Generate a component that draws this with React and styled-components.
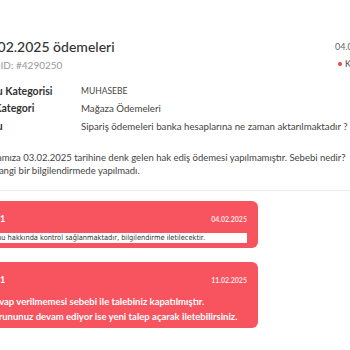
import styled, { createGlobalStyle } from "styled-components";

const GlobalStyle = createGlobalStyle`
  html, body {
    margin: 0;
    padding: 0;
    background: #fff;
    overflow: hidden;
  }
  body {
    font-family: Lato, "Noto Sans", sans-serif;
    color: #333;
  }
`;

const replies = [
  {
    id: 1,
    no: "No1",
    date: "04.02.2025",
    note: "Konu hakkında kontrol sağlanmaktadır, bilgilendirme iletilecektir.",
  },
  {
    id: 2,
    no: "No1",
    date: "11.02.2025",
    lines: [
      "Cevap verilmemesi sebebi ile talebiniz kapatılmıştır.",
      "Sorununuz devam ediyor ise yeni talep açarak iletebilirsiniz.",
    ],
  },
];

const App = () => {
  return (
    <>
      <GlobalStyle />
      <PageStyle>
        <div className='header'>
          <div>
            <h1>03.02.2025 ödemeleri</h1>
            <p className='ticketId'>Bilet ID: #4290250</p>
          </div>
          <div className='side'>
            <p className='date'>04.02.2025</p>
            <Status>Kapalı</Status>
          </div>
        </div>

        <InfoTable>
          <dt>Konu Kategorisi</dt>
          <dd className='upper'>MUHASEBE</dd>
          <dt>Alt Kategori</dt>
          <dd>Mağaza Ödemeleri</dd>
          <dt>Konu</dt>
          <dd>Sipariş ödemeleri banka hesaplarına ne zaman aktarılmaktadır ?</dd>
        </InfoTable>

        <Message>
          Firmamıza 03.02.2025 tarihine denk gelen hak ediş ödemesi yapılmamıştır. Sebebi nedir?
          <br />
          Herhangi bir bilgilendirmede yapılmadı.
        </Message>

        <Divider />

        <ReplyList>
          {replies.map((reply) => (
            <ReplyCard key={reply.id}>
              <div className='cardHead'>
                <span>{reply.no}</span>
                <span className='cardDate'>{reply.date}</span>
              </div>
              <div className='cardBody'>
                {reply.note && <Note>{reply.note}</Note>}
                {reply.lines && reply.lines.map((line) => <p key={line}>{line}</p>)}
              </div>
            </ReplyCard>
          ))}
        </ReplyList>
      </PageStyle>
    </>
  );
};

const PageStyle = styled.div`
  width: 420px;
  margin-left: -22px;
  padding-top: 37px;

  p {
    margin: 0;
  }

  .header {
    display: flex;
    justify-content: space-between;
    width: 412px;

    h1 {
      margin: 0;
      font-size: 14px;
      line-height: 20px;
      font-weight: 500;
      color: #333;
    }
  }

  .ticketId {
    margin-top: 1px;
    font-size: 10px;
    line-height: 14px;
    color: #999;
  }

  .side {
    width: 55px;
    padding-top: 4px;
  }

  .date {
    font-size: 9px;
    line-height: 12px;
    color: #666;
  }
`;

const Status = styled.p`
  display: flex;
  align-items: center;
  gap: 3px;
  margin-top: 5px !important;
  padding-left: 3px;
  font-size: 9px;
  line-height: 12px;
  color: #444;

  &::before {
    content: "";
    width: 4px;
    height: 4px;
    border-radius: 50%;
    background: #e0474c;
  }
`;

const InfoTable = styled.dl`
  display: grid;
  grid-template-columns: 103px 1fr;
  grid-auto-rows: 17.5px;
  align-items: center;
  margin: 10px 0 0;

  dt {
    font-size: 10.5px;
    font-weight: 700;
    color: #333;
  }

  dd {
    margin: 0;
    font-size: 9.7px;
    color: #444;
    white-space: nowrap;
  }

  .upper {
    font-size: 8.5px;
  }
`;

const Message = styled.p`
  margin-top: 16px !important;
  font-size: 9.5px;
  line-height: 13px;
  color: #444;
  white-space: nowrap;
`;

const Divider = styled.hr`
  margin: 13px 0 0;
  border: 0;
  border-top: 1px solid #ececec;
`;

const ReplyList = styled.div`
  display: flex;
  flex-direction: column;
  gap: 14px;
  margin-top: 10px;
`;

const ReplyCard = styled.div`
  width: 280px;
  box-sizing: border-box;
  padding: 12px 11px 4px 10px;
  border-radius: 6px;
  background: #f7545f;
  color: #fff;

  .cardHead {
    display: flex;
    justify-content: space-between;
    align-items: center;
    height: 12px;
    font-size: 9px;
    font-weight: 700;
  }

  .cardDate {
    font-size: 7px;
    color: rgba(255, 255, 255, 0.85);
  }

  .cardBody {
    margin-top: 8px;

    p {
      font-size: 9.5px;
      line-height: 15px;
      font-weight: 700;
      white-space: nowrap;
    }
  }
`;

const Note = styled.div`
  margin: 2px 0 1px;
  padding: 0 1px;
  height: 10px;
  background: #fff;
  color: #333;
  font-family: "DejaVu Sans Condensed", "DejaVu Sans", sans-serif;
  font-size: 7.4px;
  line-height: 10px;
  white-space: nowrap;
  overflow: hidden;
`;

export default App;
